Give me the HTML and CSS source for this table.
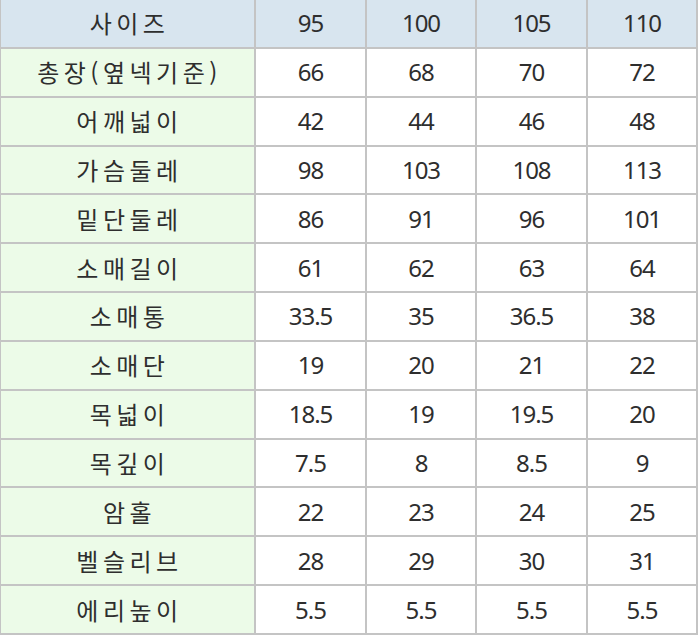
FILE: index.html
```html
<!DOCTYPE html>
<html lang="ko">
<head>
<meta charset="utf-8">
<link rel="stylesheet" href="styles.css">
</head>
<body>
<div class="size-table">
  <div class="cell head label">사이즈</div><div class="cell head num">95</div><div class="cell head num">100</div><div class="cell head num">105</div><div class="cell head num">110</div>
  <div class="cell label">총장(옆넥기준)</div><div class="cell num">66</div><div class="cell num">68</div><div class="cell num">70</div><div class="cell num">72</div>
  <div class="cell label">어깨넓이</div><div class="cell num">42</div><div class="cell num">44</div><div class="cell num">46</div><div class="cell num">48</div>
  <div class="cell label">가슴둘레</div><div class="cell num">98</div><div class="cell num">103</div><div class="cell num">108</div><div class="cell num">113</div>
  <div class="cell label">밑단둘레</div><div class="cell num">86</div><div class="cell num">91</div><div class="cell num">96</div><div class="cell num">101</div>
  <div class="cell label">소매길이</div><div class="cell num">61</div><div class="cell num">62</div><div class="cell num">63</div><div class="cell num">64</div>
  <div class="cell label">소매통</div><div class="cell num">33.5</div><div class="cell num">35</div><div class="cell num">36.5</div><div class="cell num">38</div>
  <div class="cell label">소매단</div><div class="cell num">19</div><div class="cell num">20</div><div class="cell num">21</div><div class="cell num">22</div>
  <div class="cell label">목넓이</div><div class="cell num">18.5</div><div class="cell num">19</div><div class="cell num">19.5</div><div class="cell num">20</div>
  <div class="cell label">목깊이</div><div class="cell num">7.5</div><div class="cell num">8</div><div class="cell num">8.5</div><div class="cell num">9</div>
  <div class="cell label">암홀</div><div class="cell num">22</div><div class="cell num">23</div><div class="cell num">24</div><div class="cell num">25</div>
  <div class="cell label">벨슬리브</div><div class="cell num">28</div><div class="cell num">29</div><div class="cell num">30</div><div class="cell num">31</div>
  <div class="cell label">에리높이</div><div class="cell num">5.5</div><div class="cell num">5.5</div><div class="cell num">5.5</div><div class="cell num">5.5</div>
</div>
</body>
</html>
```
FILE: styles.css
```css
html, body {
  margin: 0;
  padding: 0;
  background: #ffffff;
}

.size-table {
  box-sizing: border-box;
  width: 698px;
  height: 635px;
  display: grid;
  grid-template-columns: 253px 109px 108px 109px 108px;
  grid-template-rows: repeat(13, 1fr);
  gap: 2px;
  padding: 0 2px 2px 1px;
  background: #c4c4c4;
  font-family: "Noto Sans CJK KR", "Noto Sans", sans-serif;
  color: #2e2e2e;
}

.cell {
  display: flex;
  align-items: center;
  justify-content: center;
  background: #ffffff;
  line-height: 1;
}

.label {
  background: #ecfbe8;
  font-size: 24px;
  letter-spacing: 4.5px;
  padding-left: 4px;
}

.num {
  font-family: "Noto Sans", sans-serif;
  font-size: 24px;
  letter-spacing: -1px;
}

.head {
  background: #d8e5ef;
}
```
